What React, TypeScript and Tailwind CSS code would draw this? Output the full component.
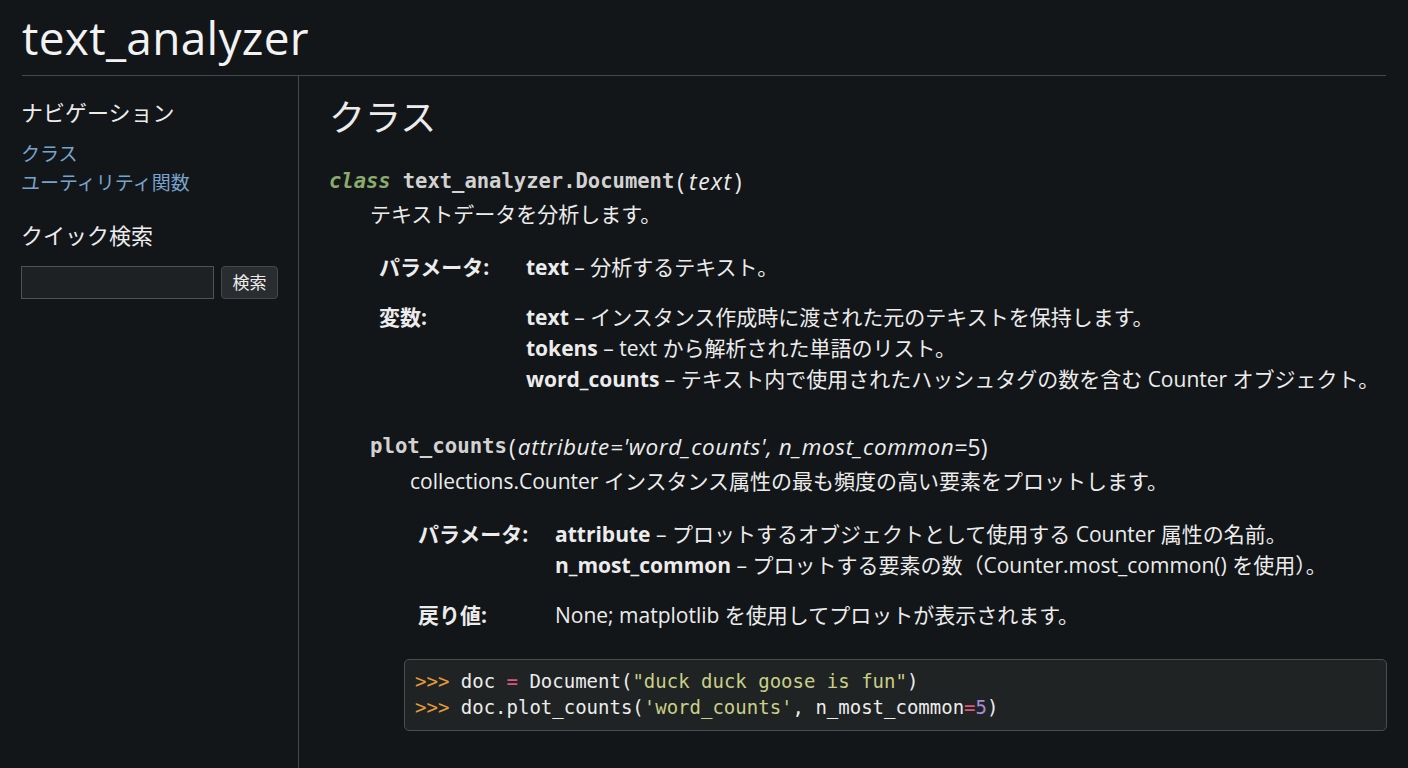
import React from "react";

const sans = { fontFamily: '"Open Sans", "Noto Sans CJK JP", sans-serif' };
const mono = { fontFamily: '"DejaVu Sans Mono", "Noto Sans CJK JP", monospace' };

export default function App() {
  return (
    <div className="min-h-[768px] w-[1408px] bg-[#131619] text-[#ececec]" style={sans}>
      <div className="px-[22px]">
        <h1 className="h-[75px] pt-[9px] text-[46px] leading-[56px] text-[#f2f2f2] tracking-[0.3px]">
          text_analyzer
        </h1>
        <div className="h-px bg-[#45484b]" />
      </div>
      <div className="flex">
        <aside className="w-[299px] shrink-0 border-r border-[#45484b] pl-[21px] pt-[20px] min-h-[692px]">
          <div className="text-[22px] leading-[32px]">ナビゲーション</div>
          <div className="mt-[12px] flex flex-col text-[19px] leading-[29px] text-[#78a4cc]">
            <span>クラス</span>
            <span>ユーティリティ関数</span>
          </div>
          <div className="mt-[21px] text-[22px] leading-[32px]">クイック検索</div>
          <div className="mt-[15px] flex items-center gap-[7px]">
            <div className="h-[33px] w-[193px] border border-[#505356] bg-[#1e2124]" />
            <div className="flex h-[33px] w-[57px] items-center justify-center rounded-[4px] border border-[#45484b] bg-[#2a2d30] text-[17px]">
              検索
            </div>
          </div>
        </aside>
        <main className="flex-1 pl-[30px] pr-[21px] pt-[18px]">
          <h2 className="text-[36px] leading-[48px]">クラス</h2>
          <div className="mt-[24px] h-[30px] flex items-center whitespace-nowrap">
            <span className="italic font-bold text-[20.5px] text-[#8aab6b]" style={mono}>class</span>
            <span className="w-[12px]" />
            <span className="font-bold text-[20.5px] text-[#d2d2d2]" style={mono}>text_analyzer.Document</span>
            <span className="text-[23px] pl-[3px]">(</span>
            <span className="italic text-[23px] tracking-[1.5px] pl-[5px]">text</span>
            <span className="text-[23px] pl-[2px]">)</span>
          </div>
          <div className="pl-[41px] text-[21px] leading-[31px] mt-[3px]">テキストデータを分析します。</div>

          <div className="pl-[50px] mt-[22px] text-[21px] leading-[31px]">
            <div className="flex">
              <div className="w-[147px] font-bold">パラメータ:</div>
              <div><b>text</b> – 分析するテキスト。</div>
            </div>
            <div className="flex mt-[19px]">
              <div className="w-[147px] font-bold">変数:</div>
              <div className="flex flex-col">
                <div><b>text</b> – インスタンス作成時に渡された元のテキストを保持します。</div>
                <div><b>tokens</b> – text から解析された単語のリスト。</div>
                <div><b>word_counts</b> – テキスト内で使用されたハッシュタグの数を含む Counter オブジェクト。</div>
              </div>
            </div>
          </div>

          <div className="pl-[41px] mt-[37px]">
            <div className="h-[30px] flex items-center whitespace-nowrap">
              <span className="font-bold text-[20.7px] text-[#d2d2d2]" style={mono}>plot_counts</span>
              <span className="text-[23px] pl-[2px]">(</span>
              <span className="italic text-[22.5px] tracking-[0.6px] pl-[2px]">attribute='word_counts', n_most_common</span>
              <span className="text-[23px]">=5)</span>
            </div>
            <div className="pl-[40px] text-[21px] leading-[31px] mt-[4px]">
              collections.Counter インスタンス属性の最も頻度の高い要素をプロットします。
            </div>
            <div className="pl-[48px] mt-[22px] text-[21px] leading-[31px]">
              <div className="flex">
                <div className="w-[137px] font-bold">パラメータ:</div>
                <div className="flex flex-col">
                  <div><b>attribute</b> – プロットするオブジェクトとして使用する Counter 属性の名前。</div>
                  <div><b>n_most_common</b> – プロットする要素の数（Counter.most_common() を使用）。</div>
                </div>
              </div>
              <div className="flex mt-[19px]">
                <div className="w-[137px] font-bold">戻り値:</div>
                <div>None; matplotlib を使用してプロットが表示されます。</div>
              </div>
            </div>
            <div className="mt-[28px] ml-[34px] rounded-[5px] border border-[#4b4e51] bg-[#202324] pl-[10px] pt-[8px] pb-[10px] text-[19px] leading-[26px]" style={mono}>
              <div>
                <span className="text-[#e59a3c]">&gt;&gt;&gt;</span> doc <span className="text-[#d9577a]">=</span> Document(<span className="text-[#c8cf86]">"duck duck goose is fun"</span>)
              </div>
              <div>
                <span className="text-[#e59a3c]">&gt;&gt;&gt;</span> doc.plot_counts(<span className="text-[#c8cf86]">'word_counts'</span>, n_most_common<span className="text-[#d9577a]">=</span><span className="text-[#a78bd6]">5</span>)
              </div>
            </div>
          </div>
        </main>
      </div>
    </div>
  );
}
